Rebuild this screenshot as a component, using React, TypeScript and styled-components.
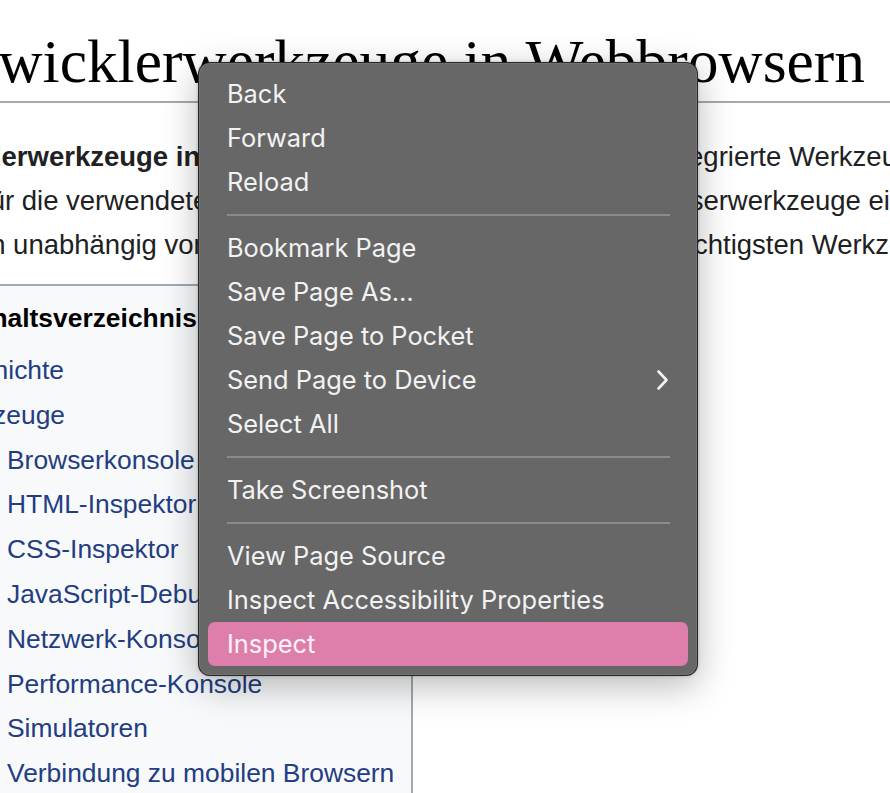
import React from "react";
import styled, { createGlobalStyle } from "styled-components";

const GlobalStyle = createGlobalStyle`
  html, body {
    margin: 0;
    padding: 0;
    background: #ffffff;
  }
  body {
    font-family: "Liberation Sans", Arial, sans-serif;
    color: #202122;
  }
`;

const Viewport = styled.div`
  position: relative;
  width: 890px;
  height: 793px;
  overflow: hidden;
  background: #ffffff;
`;

const Article = styled.div`
  font-size: 27.5px;
`;

const Title = styled.h1`
  margin: 0 0 0 -87px;
  padding-top: 21px;
  font-family: "Liberation Serif", Georgia, serif;
  font-weight: normal;
  font-size: 61.4px;
  line-height: 80px;
  color: #000000;
  white-space: nowrap;
  border-bottom: 2px solid #a2a9b1;
`;

const Intro = styled.div`
  margin-top: 32px;
`;

const Line = styled.div<{ $lead: number; $split: number }>`
  display: grid;
  grid-template-columns: ${(p) => p.$split - p.$lead}px max-content;
  margin-left: ${(p) => p.$lead}px;
  height: 44px;
  line-height: 44px;
  white-space: nowrap;
`;

const Part = styled.span`
  overflow: hidden;
`;

const Toc = styled.div`
  box-sizing: border-box;
  margin: 17px 0 0 -80px;
  width: 493px;
  padding: 10px 0 0 10px;
  background: #f8f9fa;
  border: 2px solid #a2a9b1;
  font-size: 26.4px;
  white-space: nowrap;
`;

const TocTitle = styled.div`
  margin-left: 36px;
  font-weight: bold;
  line-height: 44px;
  color: #000000;
`;

const TocList = styled.ul`
  list-style: none;
  margin: 8px 0 0;
  padding: 0;
`;

const TocItem = styled.li<{ $level: number }>`
  padding-left: ${(p) => (p.$level - 1) * 75}px;
  height: 44.8px;
  line-height: 44.8px;
  color: #233d82;
`;

const Menu = styled.div`
  position: absolute;
  left: 198px;
  top: 62px;
  width: 500px;
  box-sizing: border-box;
  padding: 9px 0;
  background: #676767;
  border: 1px solid rgba(20, 20, 20, 0.75);
  border-radius: 12px;
  box-shadow: 0 10px 36px rgba(0, 0, 0, 0.28), 0 0 3px rgba(0, 0, 0, 0.25),
    inset 0 0 0 1px rgba(255, 255, 255, 0.08);
  font-family: Inter, "Noto Sans", sans-serif;
  font-size: 25.4px;
`;

const MenuItem = styled.div<{ $active?: boolean }>`
  display: flex;
  align-items: center;
  justify-content: space-between;
  height: 44px;
  line-height: 44px;
  margin: 0 9px;
  padding: 0 19px;
  border-radius: 7px;
  color: ${(p) => (p.$active ? "#fff3f8" : "#f2f2f2")};
  background: ${(p) => (p.$active ? "#de7fab" : "transparent")};
  white-space: nowrap;
`;

const Separator = styled.div`
  height: 2px;
  margin: 10px 27px 10px 28px;
  background: #8b8b8b;
`;

const Chevron = () => (
  <svg width="13" height="22" viewBox="0 0 13 22" fill="none">
    <path
      d="M2.5 2.5 L10.5 11 L2.5 19.5"
      stroke="#f2f2f2"
      strokeWidth="2.6"
      strokeLinecap="round"
      strokeLinejoin="round"
    />
  </svg>
);

const toc = [
  { level: 1, label: "Geschichte" },
  { level: 1, label: "Werkzeuge" },
  { level: 2, label: "Browserkonsole" },
  { level: 2, label: "HTML-Inspektor" },
  { level: 2, label: "CSS-Inspektor" },
  { level: 2, label: "JavaScript-Debugger" },
  { level: 2, label: "Netzwerk-Konsole" },
  { level: 2, label: "Performance-Konsole" },
  { level: 2, label: "Simulatoren" },
  { level: 2, label: "Verbindung zu mobilen Browsern" },
];

const menu: string[][] = [
  ["Back", "Forward", "Reload"],
  ["Bookmark Page", "Save Page As…", "Save Page to Pocket", "Send Page to Device", "Select All"],
  ["Take Screenshot"],
  ["View Page Source", "Inspect Accessibility Properties", "Inspect"],
];

const App = () => {
  return (
    <Viewport>
      <GlobalStyle />
      <Article>
        <Title>Entwicklerwerkzeuge in Webbrowsern</Title>
        <Intro>
          <Line $lead={-110} $split={659}>
            <Part>
              <b>Entwicklerwerkzeuge in Webbrowsern</b> sind in Webbrowser
            </Part>
            <Part>integrierte Werkzeuge, mit denen Webentwickler</Part>
          </Line>
          <Line $lead={-18} $split={627}>
            <Part>für die verwendeten Webtechnologien die</Part>
            <Part>Browserwerkzeuge einsetzen können.</Part>
          </Line>
          <Line $lead={-152} $split={668}>
            <Part>funktionieren unabhängig vom Betriebssystem, die</Part>
            <Part>wichtigsten Werkzeuge sind</Part>
          </Line>
        </Intro>
        <Toc>
          <TocTitle>Inhaltsverzeichnis</TocTitle>
          <TocList>
            {toc.map((item) => (
              <TocItem key={item.label} $level={item.level}>
                {item.label}
              </TocItem>
            ))}
          </TocList>
        </Toc>
      </Article>
      <Menu>
        {menu.map((group, gi) => (
          <React.Fragment key={gi}>
            {gi > 0 && <Separator />}
            {group.map((label) => (
              <MenuItem key={label} $active={label === "Inspect"}>
                <span>{label}</span>
                {label === "Send Page to Device" && <Chevron />}
              </MenuItem>
            ))}
          </React.Fragment>
        ))}
      </Menu>
    </Viewport>
  );
};

export default App;
